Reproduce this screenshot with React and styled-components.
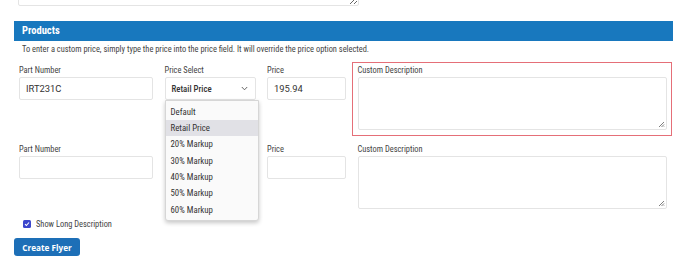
import styled, { createGlobalStyle } from "styled-components"

const GlobalStyle = createGlobalStyle`
  html, body {
    margin: 0;
    padding: 0;
    background: #ffffff;
  }
  body {
    font-family: "Roboto Condensed", "Liberation Sans Narrow", "DejaVu Sans Condensed", Roboto, sans-serif;
    font-stretch: condensed;
    color: #3b3b3b;
    overflow: hidden;
  }
`

const PRICE_OPTIONS = ["Default", "Retail Price", "20% Markup", "30% Markup", "40% Markup", "50% Markup", "60% Markup"]

const Page = styled.div`
  width: 688px;
  height: 275px;
  overflow: hidden;
  padding: 0 15px 0 14px;
  box-sizing: border-box;
`

const PrevArea = styled.textarea`
  display: block;
  width: 341px;
  height: 41px;
  margin: -35px 0 0 4px;
  box-sizing: border-box;
  border: 1px solid #e4e4e4;
  border-radius: 2px;
  resize: vertical;
  font: inherit;
`

const SectionHeader = styled.div`
  margin-top: 15px;
  height: 20px;
  background: #1878be;
  color: #ffffff;
  font-weight: 700;
  font-size: 10.5px;
  line-height: 20px;
  padding-left: 8px;
`

const Note = styled.p`
  margin: 3px 0 0 8px;
  font-size: 8.4px;
  line-height: 10px;
  color: #444444;
`

const Row = styled.div`
  position: relative;
  display: grid;
  grid-template-columns: 134px 91px 79px 309px;
  column-gap: 11.5px;
  align-items: start;
  margin: ${({ $top }) => $top}px 0 0 5px;
`

const Field = styled.div`
  position: relative;
  display: flex;
  flex-direction: column;
  gap: 2px;

  ${({ $highlight }) => $highlight && `
    &::after {
      content: "";
      position: absolute;
      top: -3px;
      left: -6px;
      right: -5px;
      bottom: -6px;
      border: 1.5px solid #e56f78;
      pointer-events: none;
    }
  `}
`

const Label = styled.label`
  font-size: 8.4px;
  line-height: 10px;
  color: #444444;
  visibility: ${({ $hidden }) => ($hidden ? "hidden" : "visible")};
`

const TextInput = styled.div`
  height: 23px;
  box-sizing: border-box;
  border: 1px solid #e4e4e4;
  border-radius: 2px;
  background: #ffffff;
  padding-left: 6px;
  font-family: Roboto, sans-serif;
  font-stretch: normal;
  font-size: 9.4px;
  line-height: 22px;
  color: #333333;
`

const SelectBox = styled.div`
  position: relative;
  height: 23px;
  box-sizing: border-box;
  border: 1px solid #e4e4e4;
  border-radius: 2px;
  background: #ffffff;
  display: flex;
  align-items: center;
  justify-content: space-between;
  padding: 0 7px 0 6px;
  font-size: 8.8px;
  font-weight: 500;
  color: #333333;
`

const Menu = styled.ul`
  position: absolute;
  top: 22px;
  left: -1px;
  width: 92px;
  margin: 0;
  padding: 2.5px 0 2px;
  list-style: none;
  background: #fafafa;
  border: 1px solid #d6d6d6;
  border-radius: 0 0 3px 3px;
  box-shadow: 0 2px 4px rgba(0, 0, 0, 0.22);
  z-index: 5;
`

const MenuItem = styled.li`
  height: 16.4px;
  line-height: 16.4px;
  padding-left: 5px;
  font-size: 8.8px;
  font-weight: 400;
  color: #333333;
  background: ${({ $active }) => ($active ? "#e1e1e6" : "transparent")};
`

const TextArea = styled.div`
  position: relative;
  height: 53px;
  box-sizing: border-box;
  border: 1px solid #e4e4e4;
  border-radius: 2px;
  background: #ffffff;
`

const Grip = styled.svg`
  position: absolute;
  right: 1px;
  bottom: 1px;
`

const CheckRow = styled.div`
  display: flex;
  align-items: center;
  gap: 5px;
  margin: 10px 0 0 9px;
  font-size: 8.4px;
  color: #444444;
`

const Check = styled.span`
  display: inline-flex;
  align-items: center;
  justify-content: center;
  width: 8px;
  height: 8px;
  border-radius: 1.5px;
  background: #3c46cc;
`

const Button = styled.button`
  display: block;
  margin-top: 9px;
  width: 66px;
  height: 18px;
  border: none;
  border-radius: 3px;
  background: #1d6fb7;
  color: #ffffff;
  font-family: "Open Sans", sans-serif;
  font-stretch: normal;
  font-weight: 700;
  font-size: 8.2px;
  padding: 0;
`

const ResizeGrip = () => (
  <Grip width="8" height="8" viewBox="0 0 8 8">
    <path d="M7 2 L2 7 M7 4.5 L4.5 7 M7 6.5 L6.5 7" stroke="#6f6f6f" strokeWidth="0.9" />
  </Grip>
)

const Chevron = () => (
  <svg width="7" height="5" viewBox="0 0 7 5">
    <path d="M0.8 1 L3.5 3.8 L6.2 1" fill="none" stroke="#555" strokeWidth="0.9" />
  </svg>
)

const ProductRow = ({ top, part, price, showSelect, open, highlight }) => (
  <Row $top={top}>
    <Field>
      <Label>Part Number</Label>
      <TextInput>{part}</TextInput>
    </Field>
    <Field>
      <Label $hidden={!showSelect}>Price Select</Label>
      {showSelect && (
        <SelectBox>
          <span>Retail Price</span>
          <Chevron />
          {open && (
            <Menu>
              {PRICE_OPTIONS.map((opt) => (
                <MenuItem key={opt} $active={opt === "Retail Price"}>{opt}</MenuItem>
              ))}
            </Menu>
          )}
        </SelectBox>
      )}
    </Field>
    <Field>
      <Label>Price</Label>
      <TextInput>{price}</TextInput>
    </Field>
    <Field $highlight={highlight}>
      <Label>Custom Description</Label>
      <TextArea>
        <ResizeGrip />
      </TextArea>
    </Field>
  </Row>
)

const App = () => (
  <>
    <GlobalStyle />
    <Page>
      <PrevArea readOnly />
      <SectionHeader>Products</SectionHeader>
      <Note>To enter a custom price, simply type the price into the price field. It will override the price option selected.</Note>
      <ProductRow top={11} part="IRT231C" price="195.94" showSelect open highlight />
      <ProductRow top={14} part="" price="" />
      <CheckRow>
        <Check>
          <svg width="6" height="6" viewBox="0 0 6 6">
            <path d="M1 3.1 L2.4 4.5 L5 1.5" fill="none" stroke="#fff" strokeWidth="1.1" />
          </svg>
        </Check>
        Show Long Description
      </CheckRow>
      <Button>Create Flyer</Button>
    </Page>
  </>
)

export default App
